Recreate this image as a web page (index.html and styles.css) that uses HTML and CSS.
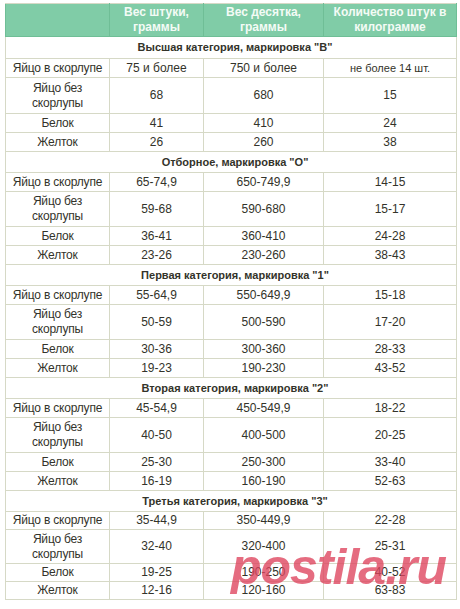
FILE: index.html
```html
<!DOCTYPE html>
<html lang="ru">
<head>
<meta charset="utf-8">
<title>Категории яиц</title>
<link rel="stylesheet" href="styles.css">
</head>
<body>
<div class="page">
<table class="eggs">
  <colgroup>
    <col class="c1"><col class="c2"><col class="c3"><col class="c4">
  </colgroup>
  <thead>
    <tr class="head">
      <th></th>
      <th>Вес штуки, граммы</th>
      <th>Вес десятка, граммы</th>
      <th>Количество штук в килограмме</th>
    </tr>
  </thead>
  <tbody>
    <tr class="cat first"><td colspan="4">Высшая категория, маркировка "В"</td></tr>
    <tr class="row"><td>Яйцо в скорлупе</td><td>75 и более</td><td>750 и более</td><td class="small">не более 14 шт.</td></tr>
    <tr class="row dbl big"><td>Яйцо без скорлупы</td><td>68</td><td>680</td><td>15</td></tr>
    <tr class="row"><td>Белок</td><td>41</td><td>410</td><td>24</td></tr>
    <tr class="row"><td>Желток</td><td>26</td><td>260</td><td>38</td></tr>

    <tr class="cat"><td colspan="4">Отборное, маркировка "О"</td></tr>
    <tr class="row"><td>Яйцо в скорлупе</td><td>65-74,9</td><td>650-749,9</td><td>14-15</td></tr>
    <tr class="row dbl"><td>Яйцо без скорлупы</td><td>59-68</td><td>590-680</td><td>15-17</td></tr>
    <tr class="row"><td>Белок</td><td>36-41</td><td>360-410</td><td>24-28</td></tr>
    <tr class="row"><td>Желток</td><td>23-26</td><td>230-260</td><td>38-43</td></tr>

    <tr class="cat"><td colspan="4">Первая категория, маркировка "1"</td></tr>
    <tr class="row"><td>Яйцо в скорлупе</td><td>55-64,9</td><td>550-649,9</td><td>15-18</td></tr>
    <tr class="row dbl"><td>Яйцо без скорлупы</td><td>50-59</td><td>500-590</td><td>17-20</td></tr>
    <tr class="row"><td>Белок</td><td>30-36</td><td>300-360</td><td>28-33</td></tr>
    <tr class="row"><td>Желток</td><td>19-23</td><td>190-230</td><td>43-52</td></tr>

    <tr class="cat"><td colspan="4">Вторая категория, маркировка "2"</td></tr>
    <tr class="row"><td>Яйцо в скорлупе</td><td>45-54,9</td><td>450-549,9</td><td>18-22</td></tr>
    <tr class="row dbl"><td>Яйцо без скорлупы</td><td>40-50</td><td>400-500</td><td>20-25</td></tr>
    <tr class="row"><td>Белок</td><td>25-30</td><td>250-300</td><td>33-40</td></tr>
    <tr class="row"><td>Желток</td><td>16-19</td><td>160-190</td><td>52-63</td></tr>

    <tr class="cat"><td colspan="4">Третья категория, маркировка "3"</td></tr>
    <tr class="row tight"><td>Яйцо в скорлупе</td><td>35-44,9</td><td>350-449,9</td><td>22-28</td></tr>
    <tr class="row dbl tight"><td>Яйцо без скорлупы</td><td>32-40</td><td>320-400</td><td>25-31</td></tr>
    <tr class="row tight"><td>Белок</td><td>19-25</td><td>190-250</td><td>40-52</td></tr>
    <tr class="row tight"><td>Желток</td><td>12-16</td><td>120-160</td><td>63-83</td></tr>
  </tbody>
</table>
<div class="watermark">postila.ru</div>
</div>
</body>
</html>
```

FILE: styles.css
```css
html, body {
  margin: 0;
  padding: 0;
  background: #ffffff;
}

.page {
  position: relative;
  width: 460px;
  height: 609px;
  overflow: hidden;
  padding: 3px 0 0 5px;
  box-sizing: border-box;
}

.eggs {
  border-collapse: collapse;
  table-layout: fixed;
  width: 451px;
  font-family: "Liberation Sans", Arial, sans-serif;
  font-size: 12px;
  color: #33332a;
  border: 1px solid #d6d9c6;
}

.c1 { width: 104px; }
.c2 { width: 94px; }
.c3 { width: 120px; }
.c4 { width: 133px; }

.eggs th,
.eggs td {
  border: 1px solid #d6d9c6;
  text-align: center;
  vertical-align: middle;
  padding: 0 2px;
  line-height: 15px;
}

.eggs .row td:first-child {
  letter-spacing: -0.2px;
  white-space: nowrap;
}

.eggs .row.dbl td:first-child {
  white-space: normal;
  padding: 0 14px;
}

.head th {
  background: #80cca7;
  color: #f4fbf6;
  font-weight: bold;
  height: 32px;
  padding: 0 6px;
  border-color: #6fbe96;
  border-top-color: #d6d9c6;
}

.eggs .cat td {
  font-weight: bold;
  font-size: 11px;
  height: 20px;
  padding-left: 10px;
}

.eggs .cat.first td {
  height: 21px;
}

.row td {
  height: 18px;
}

.row.dbl td {
  height: 34px;
}

.row.dbl.big td {
  height: 35px;
}

.row.tight td {
  height: 17px;
}

.row.dbl.tight td {
  height: 33px;
}

.small {
  font-size: 11px;
}

.watermark {
  position: absolute;
  left: 231px;
  top: 542px;
  font-family: "Liberation Sans", Arial, sans-serif;
  font-weight: bold;
  font-style: italic;
  font-size: 50px;
  line-height: 50px;
  letter-spacing: -1px;
  color: rgba(222, 66, 92, 0.78);
  white-space: nowrap;
}
```
